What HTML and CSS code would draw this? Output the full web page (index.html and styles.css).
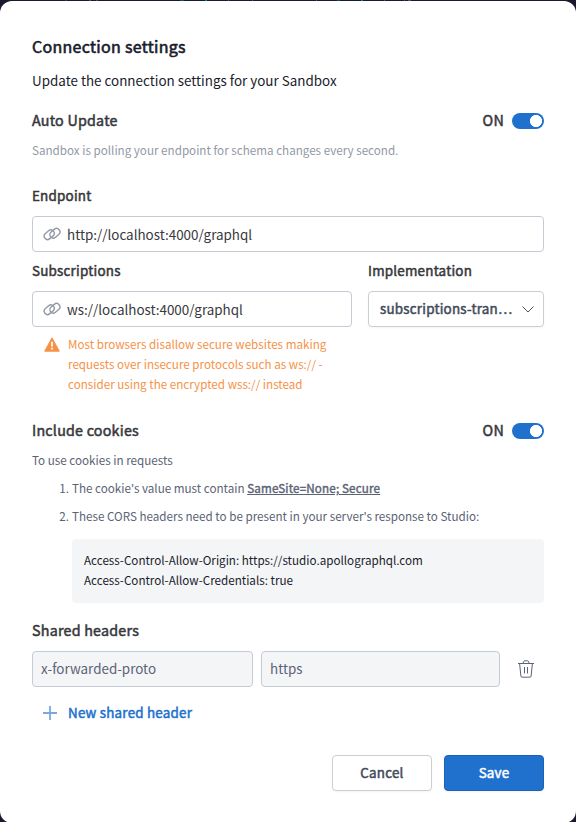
FILE: index.html
```html
<!DOCTYPE html>
<html lang="en">
<head>
<meta charset="utf-8">
<title>Connection settings</title>
<link rel="stylesheet" href="styles.css">
</head>
<body>
<svg class="sprite" aria-hidden="true">
  <symbol id="link" viewBox="0 0 18 16">
    <g fill="none" stroke="currentColor" stroke-width="1.4">
      <rect x="0.7" y="5.3" width="11" height="6.800" rx="3.400" transform="rotate(-40 6.2 8.7)"/>
      <rect x="6.4" y="3.900" width="11" height="6.800" rx="3.400" transform="rotate(-40 11.9 7.3)"/>
    </g>
  </symbol>
</svg>
<main class="modal">
  <h1 class="title">Connection settings</h1>
  <p class="intro">Update the connection settings for your Sandbox</p>

  <div class="row auto">
    <span class="label large">Auto Update</span>
    <div class="switch"><span class="label on">ON</span><i class="track"></i></div>
  </div>
  <p class="polling">Sandbox is polling your endpoint for schema changes every second.</p>

  <div class="label endpoint">Endpoint</div>
  <div class="field"><svg class="link"><use href="#link"/></svg><span class="value">http://localhost:4000/graphql</span></div>

  <div class="columns">
    <div>
      <div class="label">Subscriptions</div>
      <div class="field"><svg class="link"><use href="#link"/></svg><span class="value">ws://localhost:4000/graphql</span></div>
      <div class="warning">
        <svg class="warn-icon" viewBox="0 0 16 15"><path d="M8 0.8 15.3 14.2H0.7Z" fill="currentColor" stroke="currentColor" stroke-linejoin="round"/><path d="M8 4.800v4.600M8 10.800v1.800" stroke="#fff" stroke-width="1.700"/></svg>
        <p>Most browsers disallow secure websites making<br>requests over insecure protocols such as ws:// -<br>consider using the encrypted wss:// instead</p>
      </div>
    </div>
    <div>
      <div class="label">Implementation</div>
      <div class="field select"><span class="button-text">subscriptions-tran…</span><svg class="chevron" viewBox="0 0 12 7"><path d="M.5.5 6 6 11.5.5" fill="none" stroke="currentColor" stroke-width=".95"/></svg></div>
    </div>
  </div>

  <div class="row cookies">
    <span class="label large">Include cookies</span>
    <div class="switch"><span class="label on">ON</span><i class="track"></i></div>
  </div>
  <div class="small">
    <p>To use cookies in requests</p>
    <ol>
      <li><span class="num">1.</span><span>The cookie's value must contain <a>SameSite=None; Secure</a></span></li>
      <li><span class="num">2.</span><span>These CORS headers need to be present in your server's response to Studio:</span></li>
    </ol>
    <div class="code">Access-Control-Allow-Origin: https://studio.apollographql.com<br>Access-Control-Allow-Credentials: true</div>
  </div>

  <div class="label large shared">Shared headers</div>
  <div class="headers">
    <div class="field disabled"><span class="value">x-forwarded-proto</span></div>
    <div class="field disabled"><span class="value">https</span></div>
    <svg class="trash" viewBox="0 0 16 18"><g fill="none" stroke="currentColor"><path d="M0 3.5H16M5 3 6 1.2Q6.2.8 7 .8H9.500Q10 .8 10.300 1.200L11.200 3M1.600 3.500 2.900 16.100Q3 17.200 4 17.200H12Q13 17.200 13.100 16.100L14.400 3.500M6.500 7V13.500M9.500 7V13.500"/></g></svg>
  </div>
  <div class="add"><svg viewBox="0 0 14 14"><path d="M7 0V14M0 7H14" stroke="currentColor" fill="none" stroke-width="1.8"/></svg><span class="button-text">New shared header</span></div>

  <div class="actions"><div class="btn"><span class="button-text">Cancel</span></div><div class="btn primary"><span class="button-text">Save</span></div></div>
</main>
</body>
</html>
```
FILE: styles.css
```css
* { box-sizing: border-box; margin: 0; padding: 0; }
html, body { height: 822px; overflow: hidden; }
body { background: #191a2e; padding-top: 1px; font-family: "Noto Sans CJK SC", sans-serif; font-size: 13.42px; line-height: 20px; color: #191c2b; white-space: nowrap; }
/* Edge of the editor text behind the dialog */
body { background-image: linear-gradient(90deg, transparent 65px, #34347a 65px 67px, transparent 67px 89px, #50515f 89px 91px, transparent 91px 96px, #6c3830 96px 98px, transparent 98px 180px, #145059 180px 184px, transparent 184px 205px, #187a7b 205px 207px, transparent 207px 228px, #50515f 228px 229px, transparent 229px 252px, #804434 252px 253px, transparent 253px 316px, #804434 316px 317px, transparent 317px 337px, #145059 337px 340px, transparent 340px 361px, #187a7b 361px 363px, transparent 363px 384px, #50515f 384px 385px, transparent 385px 404px, #50515f 404px 405px, transparent 405px 408px, #50515f 408px 411px, transparent 411px); background-size: 100% 1px; background-repeat: no-repeat; }
.sprite { position: absolute; width: 0; height: 0; }
.modal { height: 822px; padding: 33px 32px 0; background: #fff; border-radius: 12px; }
.title { font-size: 16px; line-height: 24px; font-weight: 400; -webkit-text-stroke: .6px; letter-spacing: .29px; }
.intro { margin-top: 12px; }
.row { display: flex; justify-content: space-between; height: 20px; }
.auto { margin-top: 20px; }
.label { color: #36373b; -webkit-text-stroke: .5px; letter-spacing: .22px; }
.large { font-size: 14.3px; }
.switch { display: flex; align-items: center; gap: 8px; }
.on { font-size: 14.3px; }
.track { width: 32px; height: 16px; margin-top: 2px; border-radius: 8px; background: radial-gradient(circle at 24px 8px, #fff 5.800px, #2070ce 6.300px); }
.polling { margin-top: 10px; font-size: 11.650px; color: #9299a5; }
.endpoint { margin-top: 25px; }
.field { display: flex; align-items: center; height: 36px; margin-top: 11px; padding: 0 11px 0 8px; border: 1px solid #c5cad5; border-radius: 4px; color: #38393d; }
.link { width: 18px; height: 16px; margin: 0 6px 0 2px; color: #9299a5; flex: none; }
.columns { display: grid; grid-template-columns: 320px 176px; gap: 16px; margin-top: 8px; }
.select { justify-content: space-between; padding: 0 9px 0 11px; color: #434a5b; border-color: #ccced2; box-shadow: 0 1px 2px #0000000d; }
.button-text { -webkit-text-stroke: .5px; letter-spacing: .21px; margin-bottom: 2px; }
.chevron { width: 12px; height: 7px; }
.warning { display: flex; gap: 8px; margin: 7px 0 0 12px; color: #f69248; font-size: 11.650px; }
.warn-icon { width: 16px; height: 15px; margin-top: 3px; flex: none; }
.cookies { margin-top: 26px; }
.small { margin-top: 10px; font-size: 11.650px; color: #5b6375; }
.small ol { list-style: none; margin-top: 8px; display: grid; gap: 8px; }
.small li { display: flex; }
.num { width: 40px; padding-right: 3px; text-align: right; }
.small a { -webkit-text-stroke: .4px; letter-spacing: .15px; text-decoration: underline; }
.code { margin: 13px 0 0 40px; height: 64px; padding: 11px 12px; background: #f4f5f7; border-radius: 4px; color: #191c2b; }
.shared { margin-top: 17px; }
.headers { display: grid; grid-template-columns: 221px 239px 36px; gap: 8px; margin-top: 11px; align-items: center; }
.headers .field { margin: 0; padding-bottom: 2px; }
.disabled { background: #f4f5f7; color: #5b6375; }
.trash { width: 16px; height: 18px; justify-self: center; color: #5b6375; }
.add { display: flex; align-items: center; gap: 11px; margin: 16px 0 0 11px; height: 20px; color: #2070ce; }
.add svg { width: 14px; height: 14px; opacity: .6; }
.actions { display: flex; justify-content: flex-end; gap: 12px; margin-top: 32px; }
.btn { width: 100px; height: 36px; display: flex; align-items: center; justify-content: center; border: 1px solid #ccced2; border-radius: 4px; color: #434a5b; box-shadow: 0 1px 2px #0000000d; }
.primary { background: #2070ce; border-color: #1b62b6; color: #fff; }
```
